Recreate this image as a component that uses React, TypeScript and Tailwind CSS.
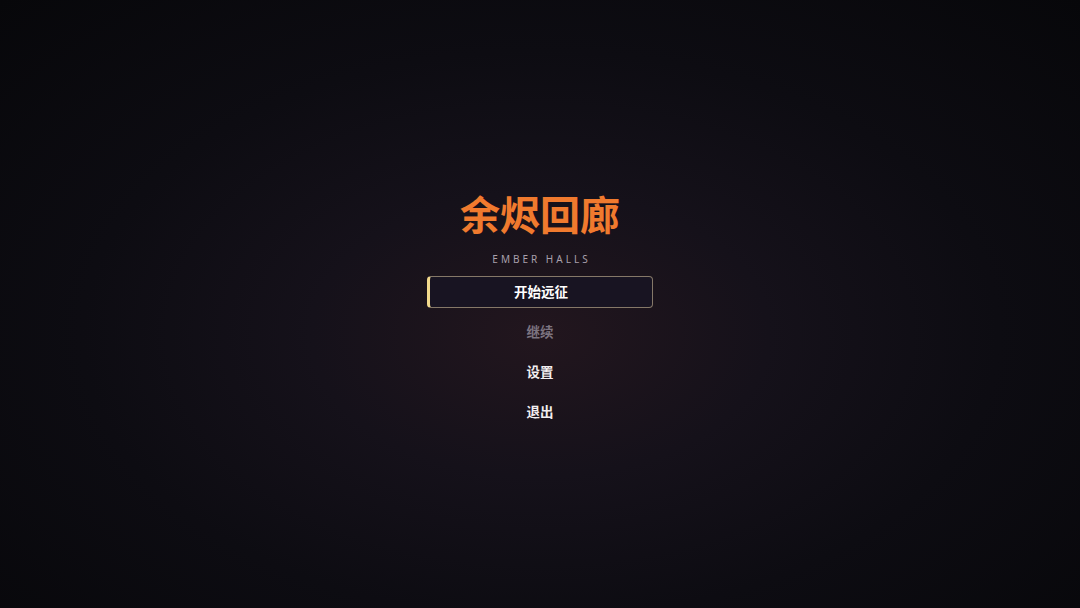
import React from 'react';

const items = [
  { label: '开始远征', active: true },
  { label: '继续', disabled: true },
  { label: '设置' },
  { label: '退出' },
];

export default function App() {
  return (
    <div
      className="w-[1080px] h-[608px] flex flex-col items-center bg-[radial-gradient(ellipse_at_50%_55%,#22161e_0%,#15111a_30%,#0d0c12_60%,#07070a_100%)]"
      style={{ fontFamily: '"Noto Sans", "Noto Sans CJK SC", sans-serif' }}
    >
      <h1 className="mt-[189px] text-[40px] leading-[52px] font-bold text-[#f07a2e]">
        余烬回廊
      </h1>
      <p className="mt-[11px] text-[10px] leading-[14px] tracking-[3px] text-[#a8a0ac] pl-[3px]">
        EMBER HALLS
      </p>
      <div className="mt-[10px] flex flex-col items-center gap-[9px]">
        {items.map((it) =>
          it.active ? (
            <button
              key={it.label}
              className="w-[226px] h-[32px] rounded-[4px] border border-[#857868] border-l-[3px] border-l-[#f2d98c] bg-[#181422] text-white text-[13.5px] font-bold"
            >
              {it.label}
            </button>
          ) : (
            <button
              key={it.label}
              className={
                'w-[226px] h-[31px] text-[13.5px] font-bold ' +
                (it.disabled ? 'text-[#7c7480]' : 'text-[#f2eef0]')
              }
            >
              {it.label}
            </button>
          )
        )}
      </div>
    </div>
  );
}
